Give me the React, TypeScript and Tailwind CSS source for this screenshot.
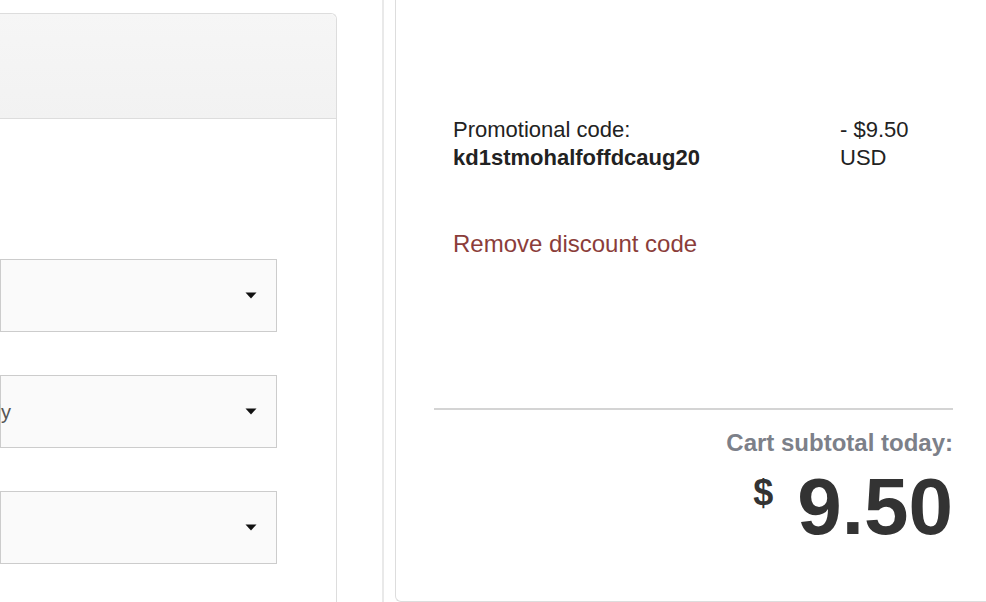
import React from 'react';

const Caret: React.FC = () => (
  <svg width="12" height="7" viewBox="0 0 12 7" className="shrink-0">
    <path d="M0.5 0.5 L11.5 0.5 L6 6.5 Z" fill="#111" />
  </svg>
);

const SelectBox: React.FC<{ value?: string }> = ({ value }) => (
  <div className="flex h-[73px] w-[277px] items-center justify-between border border-[#cccccc] bg-[#fafafa] pr-[19px]">
    <span className="-ml-[60px] text-[20px] text-[#555]">{value ?? ''}</span>
    <Caret />
  </div>
);

const App: React.FC = () => {
  return (
    <div
      className="flex h-[602px] w-[986px] overflow-hidden bg-white"
      style={{ fontFamily: '"Liberation Sans", Arial, sans-serif' }}
    >
      {/* left form card, cut off at the left edge */}
      <div className="w-[337px] shrink-0 pt-[13px]">
        <div className="h-[620px] rounded-tr-md border-t border-r border-[#dddddd] bg-white">
          <div className="h-[105px] rounded-tr-md border-b border-[#dddddd] bg-gradient-to-b from-[#f6f6f6] to-[#f2f2f2]" />
          <div className="flex flex-col gap-[43px] pt-[140px]">
            <SelectBox />
            <SelectBox value="Monthly" />
            <SelectBox />
          </div>
        </div>
      </div>

      {/* column separator */}
      <div className="ml-[45px] h-full w-[2px] shrink-0 bg-[#e9e9e9]" />

      {/* order summary card */}
      <div className="ml-[11px] h-[602px] w-[620px] shrink-0 rounded-bl-md border-b border-l border-[#dddddd] pl-[38px]">
        <div className="w-[519px]">
          <div className="flex pl-[19px] pt-[116px] text-[22px] leading-[28px] text-[#222]">
            <div className="w-[387px]">
              <div>Promotional code:</div>
              <div className="font-bold">kd1stmohalfoffdcaug20</div>
            </div>
            <div>
              <div>- $9.50</div>
              <div>USD</div>
            </div>
          </div>

          <div className="mt-[57px] pl-[19px] text-[24px] leading-[30px] text-[#8b3d3a]">
            Remove discount code
          </div>

          <div className="mt-[149px] h-[2px] bg-[#d4d4d4]" />

          <div className="mt-[18px] text-right text-[24px] font-bold leading-[30px] text-[#7c8089]">
            Cart subtotal today:
          </div>

          <div className="mt-[9px] flex items-start justify-end text-[#333]">
            <span className="mr-[24px] mt-[6px] text-[36px] font-semibold leading-[40px]">$</span>
            <span className="text-[80px] font-bold leading-[80px]">9.50</span>
          </div>
        </div>
      </div>
    </div>
  );
};

export default App;
